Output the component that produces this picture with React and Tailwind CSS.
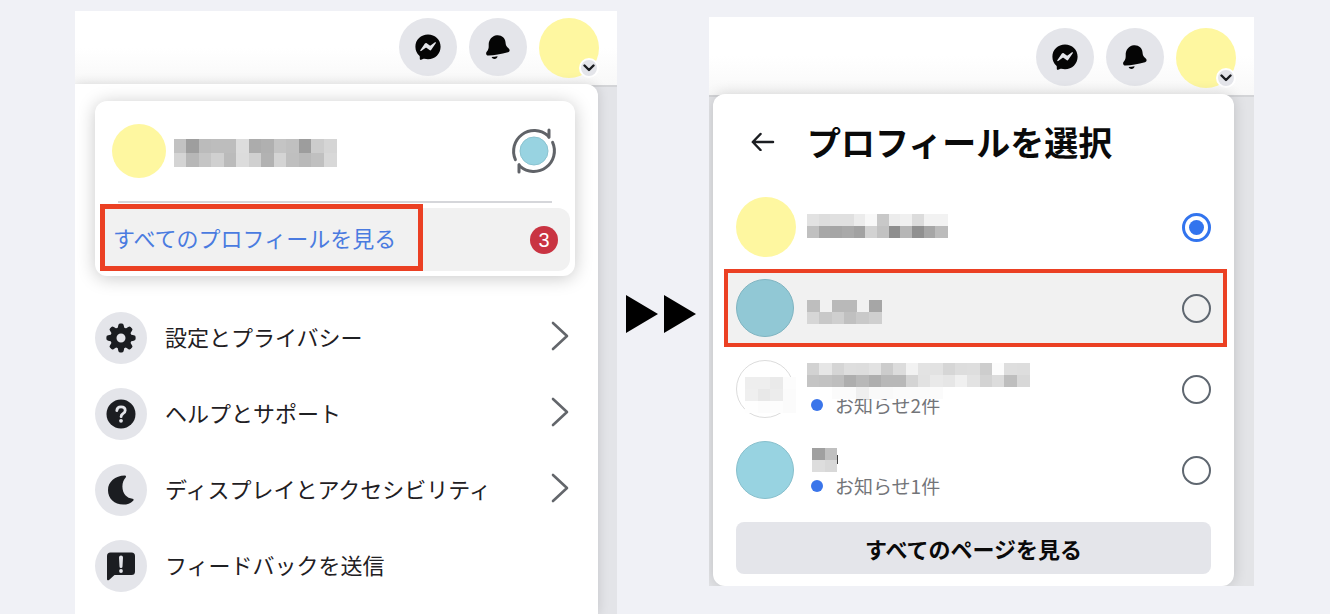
import React from "react";

const GREY = (v) => `#${v}${v}${v}`;

/* Pixelated block that hides a name. Rows hold two-digit grey levels; "--" leaves a cell empty. */
function Mosaic({ rows, width, cellHeight = 12, top = 0, height, extra }) {
  const h = height || rows.length * cellHeight;
  return (
    <svg
      width={width}
      height={h}
      className="relative z-10 block shrink-0 overflow-visible"
      shapeRendering="crispEdges"
      aria-hidden="true"
    >
      {rows.map((row, r) => {
        const cells = row.split(" ");
        const w = width / cells.length;
        return cells.map((c, i) =>
          c === "--" ? null : (
            <rect
              key={`${r}-${i}`}
              x={i * w}
              y={top + r * cellHeight}
              width={w + 0.5}
              height={cellHeight}
              fill={GREY(c)}
            />
          )
        );
      })}
      {extra}
    </svg>
  );
}

function MessengerIcon() {
  return (
    <svg width="28" height="28" viewBox="0 0 28 28" aria-hidden="true">
      <path
        d="M14 1.5C7 1.5 1.4 6.700 1.400 13.700c0 3.700 1.500 6.900 4 9.100.300.300.400.600.400 1v2c0 .800.700 1.300 1.400 1l2.300-1c.300-.100.600-.100.900 0 1.100.300 2.400.400 3.600.400 7.100 0 12.600-5.200 12.600-12.400S21.100 1.500 14 1.500Z"
        fill="#050505"
      />
      <path
        d="m6.300 17.300 4.600-6.700c.5-.6 1.200-.7 1.800-.3l3.100 2.300c.2.200.5.200.7 0l4.500-3.300c.6-.4 1.300.2.900.8l-4.600 6.700c-.4.600-1.200.8-1.800.3l-3.100-2.300a.6.6 0 0 0-.7 0l-4.500 3.300c-.6.400-1.300-.2-.9-.8Z"
        fill="#e4e5ea"
      />
    </svg>
  );
}

function BellIcon() {
  return (
    <svg width="26" height="28" viewBox="0 0 26 28" aria-hidden="true">
      <path
        d="M11.800 2.200c4.700-.500 8.400 2.600 8.700 7 .200 3 .900 4.500 3 6 1.600 1.100 1.500 3.500-.5 4-3.300.8-7 1.600-10.300 2.300-3.300.7-6.300 1-9.300 1.100-2 .1-3-2.200-1.700-3.800 1.800-2.200 2.100-3.800 2-6.800-.2-5.100 3.200-9.300 8.100-9.800Z"
        fill="#050505"
      />
      <path d="M6.600 24.100c2 0 4.200-.3 6-.8-.4 1.800-1.500 2.800-3.100 2.800-1.300 0-2.400-.7-2.900-2Z" fill="#050505" />
    </svg>
  );
}

function GearIcon() {
  const teeth = [0, 45, 90, 135, 180, 225, 270, 315];
  return (
    <svg width="30" height="30" viewBox="0 0 30 30" aria-hidden="true">
      {teeth.map((a) => (
        <path
          key={a}
          d="M11.300 7 12.300 2.200Q12.600.400 14 .400h2q1.400 0 1.700 1.800L18.700 7Z"
          fill="#1b1d21"
          transform={`rotate(${a} 15 15)`}
        />
      ))}
      <circle cx="15" cy="15" r="7.600" fill="none" stroke="#1b1d21" strokeWidth="6.200" />
    </svg>
  );
}

function HelpIcon() {
  return (
    <svg width="30" height="30" viewBox="0 0 30 30" aria-hidden="true">
      <circle cx="15" cy="15" r="14.500" fill="#1b1d21" />
      <path
        d="M10.800 11.600c.2-2.300 1.900-3.700 4.200-3.700 2.400 0 4.200 1.300 4.200 3.500 0 1.500-.8 2.300-2.300 3.300-1.300.8-1.800 1.400-1.800 3"
        fill="none"
        stroke="#e4e5ea"
        strokeWidth="2.800"
        strokeLinecap="round"
      />
      <circle cx="15" cy="21.800" r="1.900" fill="#e4e5ea" />
    </svg>
  );
}

function MoonIcon() {
  return (
    <svg width="30" height="30" viewBox="0 0 30 30" aria-hidden="true">
      <path
        d="M18.900.6c1.100-.1 1.500 1 .8 1.900-1.900 2.200-3.300 5-3.300 9 0 7.200 4.700 11.800 10.100 12.200 1.200.1 1.500 1.200.7 2-2.700 2.500-6 3.900-10 3.900C8.500 29.600 2 23.400 2 15.200 2 6.900 9 .9 18.900.6Z"
        fill="#1b1d21"
      />
    </svg>
  );
}

function FeedbackIcon() {
  return (
    <svg width="30" height="30" viewBox="0 0 30 30" aria-hidden="true">
      <path
        d="M4.500 1.500h21a3.500 3.500 0 0 1 3.500 3.500v15.500a3.500 3.500 0 0 1-3.500 3.500H8.500L3 28.900C2 29.700 1 29.300 1 28V5a3.500 3.500 0 0 1 3.500-3.500Z"
        fill="#1b1d21"
      />
      <path d="M13 6.600a2 2 0 0 1 4 0l-.5 9a1.500 1.500 0 0 1-3 0Z" fill="#e4e5ea" />
      <circle cx="15" cy="20" r="1.900" fill="#e4e5ea" />
    </svg>
  );
}

function SwitchIcon() {
  return (
    <svg width="44" height="44" viewBox="0 0 44 44" className="overflow-visible" aria-hidden="true">
      <circle cx="22" cy="22" r="14" fill="#98d3e1" stroke="#8ac3d0" strokeWidth="1" />
      <g fill="none" stroke="#606368" strokeWidth="3" strokeLinecap="round" strokeLinejoin="round">
        <path d="M3.400 30.600A20.600 20.600 0 0 1 35.800 6.700l1.200 1.600V1" />
        <path d="M40.600 13.400A20.600 20.600 0 0 1 8.200 37.300L7 35.700V43" />
      </g>
    </svg>
  );
}

function ForwardIcon() {
  return (
    <svg width="18" height="30" viewBox="0 0 18 30" className="shrink-0" aria-hidden="true">
      <path d="M2 2l14 13L2 28" fill="none" stroke="#63666b" strokeWidth="2.600" strokeLinecap="round" strokeLinejoin="round" />
    </svg>
  );
}

function BackIcon() {
  return (
    <svg width="24" height="20" viewBox="0 0 24 20" aria-hidden="true">
      <path d="M22 11H2M9.500 3 1.800 11l7.700 8" fill="none" stroke="#1b1d21" strokeWidth="2.500" strokeLinecap="round" strokeLinejoin="round" />
    </svg>
  );
}

function TopBar({ className }) {
  return (
    <header
      className={`flex items-start justify-end gap-3 border-b-2 border-[#d3d4d7] bg-linear-to-b from-white from-50% to-[#f8f8f8] pr-[18px] ${className}`}
    >
      <button type="button" aria-label="Messenger" className="flex size-[58px] items-center justify-center rounded-full bg-[#e4e5ea]">
        <MessengerIcon />
      </button>
      <button type="button" aria-label="お知らせ" className="flex size-[58px] items-center justify-center rounded-full bg-[#e4e5ea]">
        <BellIcon />
      </button>
      <button type="button" aria-label="アカウント" className="relative size-[60px] rounded-full bg-[#fef7a0]">
        <span className="absolute right-0 bottom-0 flex size-5 items-center justify-center rounded-full border-2 border-white bg-[#e4e5ea]">
          <svg width="12" height="8" viewBox="0 0 12 8" aria-hidden="true">
            <path d="M1.500 1.500 6 6l4.500-4.500" fill="none" stroke="#1b1d21" strokeWidth="2.400" strokeLinecap="round" strokeLinejoin="round" />
          </svg>
        </span>
      </button>
    </header>
  );
}

const MENU = [
  { label: "設定とプライバシー", Icon: GearIcon, more: true },
  { label: "ヘルプとサポート", Icon: HelpIcon, more: true },
  { label: "ディスプレイとアクセシビリティ", Icon: MoonIcon, more: true },
  { label: "フィードバックを送信", Icon: FeedbackIcon, more: false },
];

function AccountMenu() {
  return (
    <section className="mt-[11px] flex flex-col overflow-hidden bg-[#e3e4e8]">
      <TopBar className="h-[76px] pt-[7px]" />
      <div className="relative -mt-[3px] mr-[19px] grow rounded-tr-xl bg-white pt-[17px] pr-[23px] pl-5 shadow-[0_0_12px_rgba(0,0,0,0.14)]">
        <div className="rounded-xl bg-white px-[5px] pb-[5px] shadow-[0_2px_18px_rgba(0,0,0,0.22)]">
          <div className="flex h-[100px] items-center pr-[14px] pl-3">
            <span className="mr-2 size-[54px] shrink-0 rounded-full bg-[#fef7a0]" />
            <Mosaic
              width={162}
              height={24}
              cellHeight={14}
              rows={[
                "c2 9e bb bd bd dd ac b0 c4 c0 9d cc d5",
                "d4 b7 c5 d0 bb dc d0 b2 d4 bf b9 c0 d8",
              ]}
            />
            <button type="button" aria-label="プロフィールを切り替え" className="ml-auto">
              <SwitchIcon />
            </button>
          </div>
          <hr className="mx-[18px] mb-[5px] h-0.5 border-0 bg-[#d5d6da]" />
          <div className="flex h-[63px] items-center rounded-xl bg-[#f1f1f1] pr-3">
            <a
              href="#profiles"
              className="-mt-1 flex h-[67px] items-center border-[5px] border-[#eb4023] bg-[#f1f1f1] pr-[22px] pl-2 text-[22px] whitespace-nowrap text-[#4a7be0]"
            >
              すべてのプロフィールを見る
            </a>
            <span className="ml-auto flex size-7 items-center justify-center rounded-full bg-[#c93442] font-['Liberation_Sans',sans-serif] text-xl text-white">
              3
            </span>
          </div>
        </div>
        <nav className="mt-9 flex flex-col gap-6 pb-[22px]">
          {MENU.map(({ label, Icon, more }) => (
            <button key={label} type="button" className="flex h-[52px] items-center pr-[6px] text-left">
              <span className="mr-[18px] flex size-[52px] shrink-0 items-center justify-center rounded-full bg-[#e4e5ea]">
                <Icon />
              </span>
              <span className="flex grow items-center justify-between pb-1">
                <span className="text-[22px] whitespace-nowrap text-[#1f2023]">{label}</span>
                {more && <ForwardIcon />}
              </span>
            </button>
          ))}
        </nav>
      </div>
    </section>
  );
}

function HiddenAvatar() {
  const cells = ["ee ee ea fc", "ef e8 ec fb", "fe fc fd fb"];
  return (
    <span className="relative block size-[58px] rounded-full border border-[#dcdcdc]">
      <span className="absolute top-4 left-2">
        <Mosaic width={50} rows={cells} />
      </span>
    </span>
  );
}

const TealAvatar = ({ tone }) => <span className={`block size-[58px] rounded-full border ${tone}`} />;

const PROFILES = [
  {
    id: "p1",
    avatar: <span className="block size-[60px] rounded-full bg-[#fef7a0]" />,
    name: (
      <Mosaic
        width={140}
        height={26}
        rows={["e2 dd e0 e0 ec f8 c8 ec f0 dc f2 f2", "c0 a7 a5 a9 a2 d2 c2 8e b6 90 a6 bb"]}
      />
    ),
  },
  {
    id: "p2",
    marked: true,
    avatar: <TealAvatar tone="border-[#7fb4c1] bg-[#91c8d5]" />,
    name: <Mosaic width={74} top={4} rows={["be -- b9 b9 -- a6", "d6 c8 cf c0 c9 cf"]} />,
  },
  {
    id: "p3",
    avatar: <HiddenAvatar />,
    news: "お知らせ2件",
    name: (
      <Mosaic
        width={222}
        height={32}
        top={2}
        rows={[
          "d2 e6 d5 de dd e2 cc dc f2 e3 e2 d6 dd de cd fc de dd",
          "c4 c2 be ae b8 ae b8 b8 d4 e2 e9 e6 f0 e3 d3 dc be d8",
          "-- -- fb fb ef f9 f9 fb fb fb fb -- -- -- -- -- -- --",
        ]}
      />
    ),
  },
  {
    id: "p4",
    avatar: <TealAvatar tone="border-[#87bfcc] bg-[#98d3e1]" />,
    news: "お知らせ1件",
    name: (
      <Mosaic
        width={32}
        height={32}
        rows={[]}
        extra={
          <>
            <rect x="5" y="6" width="13" height="12" fill="#a0a0a0" />
            <rect x="18" y="6" width="12" height="12" fill="#c0c0c0" />
            <rect x="5" y="18" width="13" height="12" fill="#dddddd" />
            <rect x="18" y="18" width="12" height="12" fill="#d8d8d8" />
            <rect x="30" y="13" width="1" height="9" fill="#444444" />
          </>
        }
      />
    ),
  },
];

function ProfilePicker() {
  return (
    <section className="mt-[17px] self-start overflow-hidden bg-[#e3e4e7]">
      <TopBar className="h-[80px] pt-[11px]" />
      <div className="relative -mt-[3px] mr-5 ml-1 rounded-xl bg-white pb-3 shadow-[0_0_14px_rgba(0,0,0,0.16)]">
        <div className="flex h-[94px] items-center gap-[32px] pl-[38px]">
          <button type="button" aria-label="戻る">
            <BackIcon />
          </button>
          <h1 className="text-[34px] font-bold whitespace-nowrap text-[#0a0a0a]">プロフィールを選択</h1>
        </div>
        <fieldset className="flex flex-col gap-[3px] pr-[7px] pl-[11px]">
          {PROFILES.map((p, i) => (
            <label
              key={p.id}
              htmlFor={p.id}
              className={`flex h-[78px] items-center border-4 pr-3 pl-2 ${
                p.marked ? "border-[#eb4023] bg-[#f1f1f1]" : "border-transparent"
              }`}
            >
              <span className="mr-[13px] w-[58px] shrink-0">{p.avatar}</span>
              <span className="flex flex-col">
                {p.name}
                {p.news && (
                  <span className="flex h-6 items-center gap-3 pl-1 text-[19px] whitespace-nowrap text-[#737579]">
                    <span className="size-3 rounded-full bg-[#3a75ea]" />
                    {p.news}
                  </span>
                )}
              </span>
              <input
                type="radio"
                id={p.id}
                name="profile"
                aria-label={`プロフィール ${i + 1}`}
                defaultChecked={i === 0}
                className="ml-auto size-[29px] shrink-0 appearance-none rounded-full border-2 border-[#5f6770] bg-clip-content p-1 checked:border-[3px] checked:border-[#3274ee] checked:bg-[#3274ee]"
              />
            </label>
          ))}
        </fieldset>
        <div className="px-[23px] pt-[13px]">
          <button type="button" className="h-[52px] w-full rounded-lg bg-[#e4e5ea] text-[22px] font-bold text-[#0a0a0a]">
            すべてのページを見る
          </button>
        </div>
      </div>
    </section>
  );
}

export default function App() {
  return (
    <main className="grid min-h-screen grid-cols-[542fr_92px_545fr] bg-[#f0f1f6] pr-[76px] pl-[75px] font-['Noto_Sans_CJK_JP',sans-serif]">
      <AccountMenu />
      <svg width="72" height="38" viewBox="0 0 72 38" className="mt-[14px] ml-2 self-center" aria-hidden="true">
        <path d="M1 0l32 19L1 38ZM39 0l32 19-32 19Z" fill="#000" />
      </svg>
      <ProfilePicker />
    </main>
  );
}
